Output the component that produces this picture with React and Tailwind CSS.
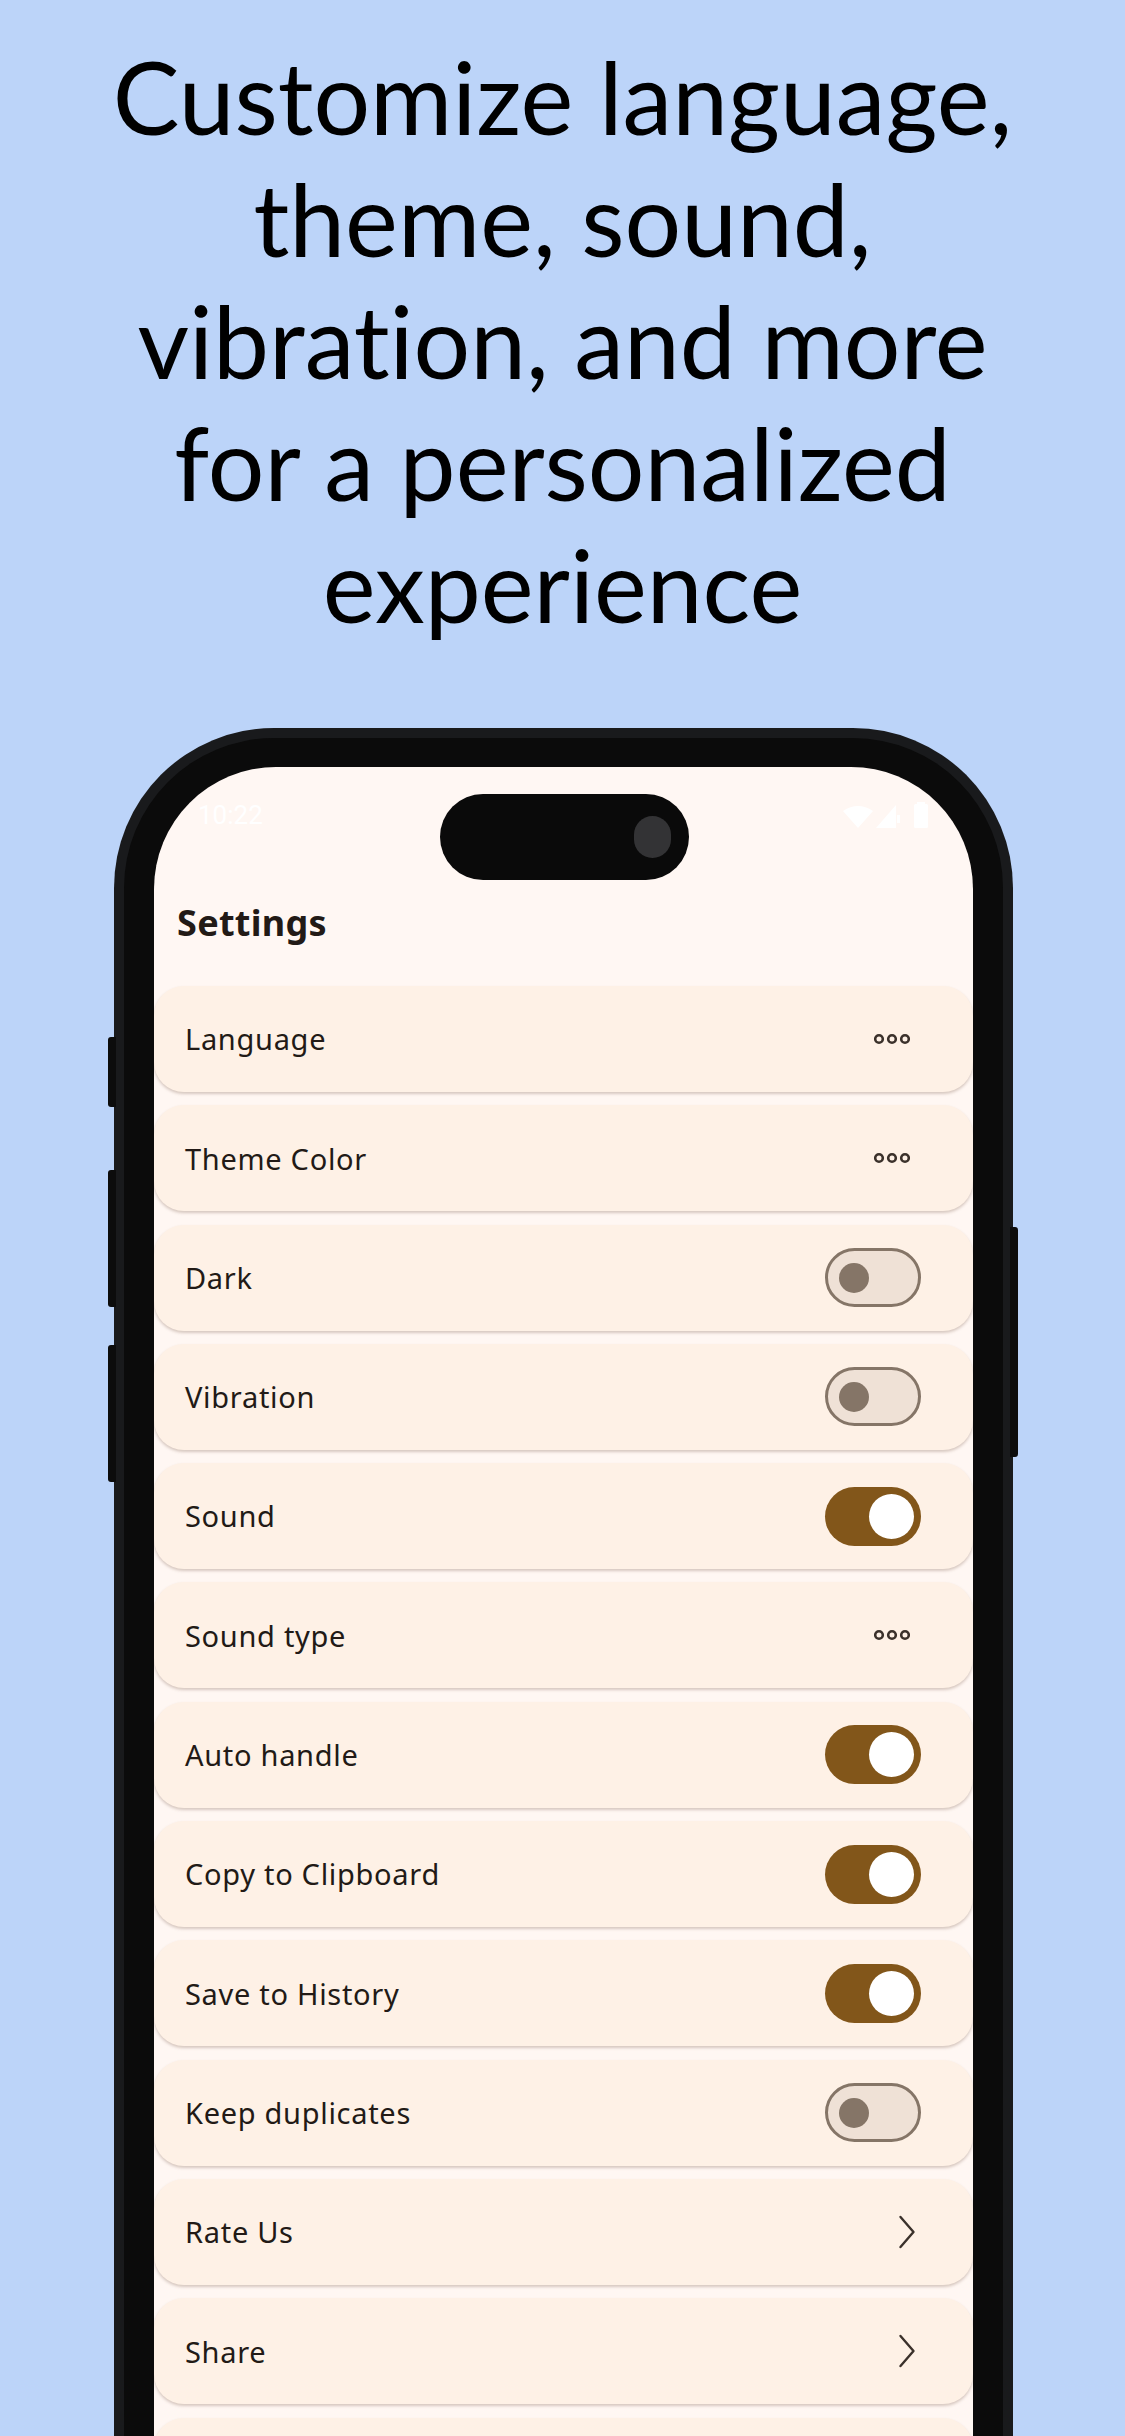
import React from 'react';

const rows = [
    { label: 'Language', type: 'more' },
    { label: 'Theme Color', type: 'more' },
    { label: 'Dark', type: 'toggle', on: false },
    { label: 'Vibration', type: 'toggle', on: false },
    { label: 'Sound', type: 'toggle', on: true },
    { label: 'Sound type', type: 'more' },
    { label: 'Auto handle', type: 'toggle', on: true },
    { label: 'Copy to Clipboard', type: 'toggle', on: true },
    { label: 'Save to History', type: 'toggle', on: true },
    { label: 'Keep duplicates', type: 'toggle', on: false },
    { label: 'Rate Us', type: 'link' },
    { label: 'Share', type: 'link' },
    { label: '', type: 'none' },
];

const Dots = () => (
    <svg width="36" height="12" viewBox="0 0 36 12" className="mr-[11px]">
        <circle cx="5" cy="6" r="3.8" fill="none" stroke="#3b312b" strokeWidth="2.6" />
        <circle cx="18" cy="6" r="3.8" fill="none" stroke="#3b312b" strokeWidth="2.6" />
        <circle cx="31" cy="6" r="3.8" fill="none" stroke="#3b312b" strokeWidth="2.6" />
    </svg>
);

const Chevron = () => (
    <svg width="18" height="34" viewBox="0 0 18 34" className="mr-[5px]">
        <path d="M2.5 2 L15.5 17 L2.5 32" fill="none" stroke="#3b312b" strokeWidth="2.4" strokeLinecap="round" strokeLinejoin="round" />
    </svg>
);

const Toggle = ({ on }) =>
    on ? (
        <div className="w-[96px] h-[59px] rounded-full bg-[#82561a] flex items-center justify-end pr-[7px]">
            <div className="w-[45px] h-[45px] rounded-full bg-white" />
        </div>
    ) : (
        <div className="w-[96px] h-[59px] rounded-full bg-[#efe1d6] border-[3px] border-[#857567] flex items-center pl-[11px]">
            <div className="w-[30px] h-[30px] rounded-full bg-[#857567]" />
        </div>
    );

const Row = ({ row }) => (
    <div className="h-[106px] shrink-0 rounded-[30px] bg-[#fef1e6] shadow-[0_2px_3px_rgba(110,80,60,0.28)] flex items-center justify-between pl-[31px] pr-[52px]">
        <span className="text-[29px] tracking-[0.7px] text-[#221a16]">{row.label}</span>
        {row.type === 'more' && <Dots />}
        {row.type === 'toggle' && <Toggle on={row.on} />}
        {row.type === 'link' && <Chevron />}
    </div>
);

const StatusIcons = () => (
    <div className="flex items-end gap-[3px]">
        <svg width="30" height="22" viewBox="0 0 30 22">
            <path d="M15 22 L0 5 Q15 -5 30 5 Z" fill="#ffffff" />
        </svg>
        <svg width="24" height="23" viewBox="0 0 24 23">
            <path d="M20 0 L20 23 L0 23 Z" fill="#ffffff" />
            <rect x="21" y="10" width="3" height="8" fill="#ffffff" />
        </svg>
        <svg width="16" height="26" viewBox="0 0 16 26" className="ml-[10px]">
            <rect x="4" y="0" width="8" height="3" fill="#ffffff" />
            <rect x="1" y="2" width="14" height="24" rx="1.5" fill="#ffffff" />
        </svg>
    </div>
);

export default function App() {
    return (
        <div
            className="w-[1125px] h-[2436px] bg-[#bcd4f9] overflow-hidden flex flex-col items-center"
            style={{ fontFamily: '"Noto Sans", "Open Sans", sans-serif' }}
        >
            <h1
                className="pt-[35px] text-[100px] leading-[122px] text-black text-center font-normal [font-variant-ligatures:none]"
                style={{ fontFamily: 'Lato, "Noto Sans", sans-serif' }}
            >
                Customize language,
                <br />
                theme, sound,
                <br />
                vibration, and more
                <br />
                for a personalized
                <br />
                experience
            </h1>

            <div className="relative mt-[83px] w-[899px] self-start ml-[114px] flex-1">
                {/* side buttons */}
                <div className="absolute left-[-6px] top-[309px] w-[8px] h-[70px] rounded-l-[3px] bg-[#0c0c0c]" />
                <div className="absolute left-[-6px] top-[442px] w-[8px] h-[137px] rounded-l-[3px] bg-[#0c0c0c]" />
                <div className="absolute left-[-6px] top-[617px] w-[8px] h-[137px] rounded-l-[3px] bg-[#0c0c0c]" />
                <div className="absolute right-[-5px] top-[499px] w-[8px] h-[230px] rounded-r-[3px] bg-[#0c0c0c]" />

                <div className="h-full rounded-t-[160px] bg-[#0b0b0b] border-[10px] border-b-0 border-[#191a1c] pt-[29px] px-[30px]">
                    <div className="relative h-full rounded-t-[122px] bg-[#fff7f3] overflow-hidden flex flex-col">
                        {/* dynamic island */}
                        <div className="absolute left-[286px] top-[27px] w-[249px] h-[86px] rounded-full bg-[#0a0a0a]">
                            <div className="absolute left-[194px] top-[22px] w-[37px] h-[42px] rounded-full bg-[#333335]" />
                        </div>

                        <div className="flex items-center justify-between pl-[44px] pr-[44px] pt-[34px] h-[62px]">
                            <span className="text-[26px] text-white" style={{ fontFamily: 'Roboto, sans-serif' }}>10:22</span>
                            <StatusIcons />
                        </div>

                        <div className="pl-[23px] pt-[67px] h-[157px]">
                            <span className="text-[36px] font-bold tracking-[0.3px] text-[#221a16]">Settings</span>
                        </div>

                        <div className="flex flex-col gap-[13.3px]">
                            {rows.map((row, i) => (
                                <Row key={i} row={row} />
                            ))}
                        </div>
                    </div>
                </div>
            </div>
        </div>
    );
}
